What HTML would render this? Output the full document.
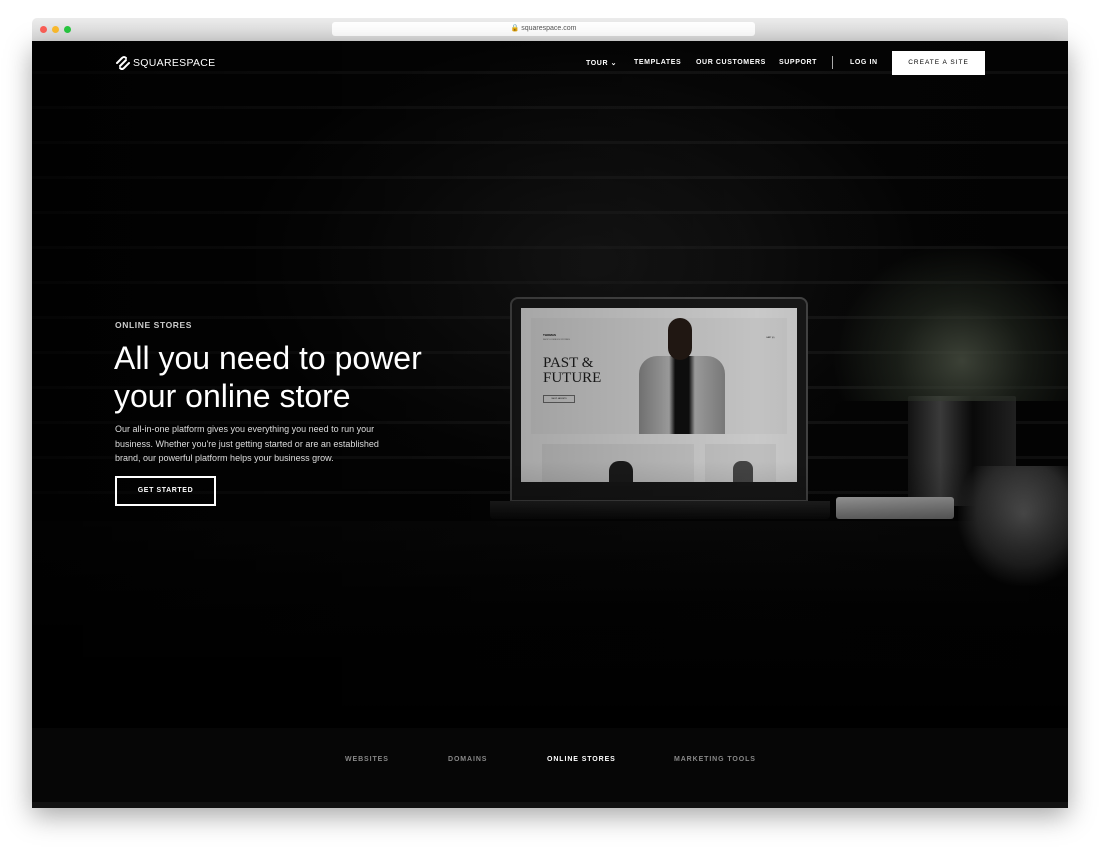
<!DOCTYPE html>
<html><head><style>
*{margin:0;padding:0;box-sizing:border-box}
body{width:1100px;height:855px;background:#fff;position:relative;overflow:hidden;font-family:"Liberation Sans",sans-serif}
.chrome{position:absolute;left:32px;top:18px;width:1036px;height:23px;background:linear-gradient(#ececec,#d8d8d8);border-radius:5px 5px 0 0}
.dot{position:absolute;top:8px;width:7px;height:7px;border-radius:50%}
.url{position:absolute;left:300px;top:4px;width:423px;height:14px;background:#fff;border-radius:3px;font-size:7px;color:#555;text-align:center;line-height:14px}
.page{position:absolute;left:32px;top:41px;width:1036px;height:767px;background:#000;overflow:hidden;box-shadow:0 8px 25px rgba(0,0,0,.35)}
.bricks{position:absolute;left:0;top:0;width:1036px;height:520px;
background:
repeating-linear-gradient(0deg,rgba(0,0,0,0) 0 32px,rgba(40,40,40,.5) 32px 35px),
radial-gradient(ellipse 500px 320px at 560px 220px,#1a1a1a,#050505 70%);
}
.fade{position:absolute;left:0;top:0;width:1036px;height:700px;background:linear-gradient(90deg,rgba(0,0,0,.8) 0,rgba(0,0,0,.35) 45%,rgba(0,0,0,.2) 70%,rgba(0,0,0,.4) 100%),linear-gradient(180deg,rgba(0,0,0,0) 60%,#000 100%)}
.nav{position:absolute;top:18px;font-size:7px;color:#fff;letter-spacing:.6px;font-weight:bold}
.footer{position:absolute;left:0;top:687px;width:1036px;height:80px;background:#060606;border-bottom:6px solid #111}
.ft{position:absolute;top:28px;font-size:7px;letter-spacing:.9px;font-weight:bold;color:#888}
</style></head><body>
<div class="chrome">
<div class="dot" style="left:8px;background:#fc5f57"></div>
<div class="dot" style="left:20px;background:#fdbc2e"></div>
<div class="dot" style="left:32px;background:#28c840"></div>
<div class="url">🔒 squarespace.com</div>
</div>
<div class="page">
<div class="bricks"></div>
<div style="position:absolute;left:0;top:480px;width:1036px;height:210px;background:linear-gradient(180deg,#0d0d0d,#060606 50%,#030303)"></div>
<div style="position:absolute;left:478px;top:256px;width:298px;height:205px;background:#1c1c1c;border:2px solid #555;border-radius:8px 8px 0 0"></div>
<div style="position:absolute;left:458px;top:460px;width:340px;height:18px;background:linear-gradient(#2a2a2a,#0c0c0c);border-radius:0 0 4px 4px"></div>
<div style="position:absolute;left:489px;top:267px;width:276px;height:174px;background:#fbfbfb;overflow:hidden">
 <div style="position:absolute;left:10px;top:10px;width:256px;height:116px;background:#f3f3f3"></div>
 <div style="position:absolute;left:22px;top:25px;font-size:3px;font-weight:bold">THOMAS</div>
 <div style="position:absolute;left:22px;top:31px;font-size:2px;color:#555">SHOP LOOKBOOK STORIES</div>
 <div style="position:absolute;left:245px;top:29px;font-size:2px">CART (0)</div>
 <div style="position:absolute;left:22px;top:48px;font-family:'Liberation Serif',serif;font-size:15px;line-height:15px;color:#222">PAST &amp;<br>FUTURE</div>
 <div style="position:absolute;left:22px;top:87px;width:32px;height:8px;border:1px solid #777;font-size:2px;line-height:6px;text-align:center">SHOP JACKETS</div>
 <div style="position:absolute;left:118px;top:48px;width:86px;height:78px;background:linear-gradient(90deg,#999,#ccc 35%,#111 42%,#111 58%,#c8c8c8 65%,#999);border-radius:18px 18px 0 0"></div>
 <div style="position:absolute;left:147px;top:10px;width:24px;height:42px;background:#2a1e18;border-radius:12px"></div>
 <div style="position:absolute;left:21px;top:136px;width:152px;height:40px;background:#eee"></div>
 <div style="position:absolute;left:184px;top:136px;width:71px;height:40px;background:#eee"></div>
 <div style="position:absolute;left:88px;top:153px;width:24px;height:25px;background:#222;border-radius:10px 10px 0 0"></div>
 <div style="position:absolute;left:212px;top:153px;width:20px;height:25px;background:#555;border-radius:8px 8px 0 0"></div>
</div>
<div style="position:absolute;left:876px;top:355px;width:108px;height:110px;background:linear-gradient(90deg,#1a1a1a,#555 30%,#0e0e0e 60%,#333);border-radius:2px"></div>
<div style="position:absolute;left:800px;top:200px;width:236px;height:160px;background:radial-gradient(ellipse at 130px 120px,rgba(110,120,100,.8),rgba(60,70,55,.55) 35%,rgba(0,0,0,0) 70%)"></div>
<div style="position:absolute;left:926px;top:425px;width:110px;height:120px;background:radial-gradient(ellipse at 60% 40%,#888,#444 50%,rgba(0,0,0,0) 72%)"></div>
<div style="position:absolute;left:804px;top:456px;width:118px;height:22px;background:linear-gradient(#ddd,#999);border-radius:3px"></div>
<div class="fade"></div>
<svg style="position:absolute;left:82px;top:14px" width="18" height="16" viewBox="0 0 18 16"><g fill="none" stroke="#fff" stroke-width="2" stroke-linecap="round"><path d="M3 8 L8 3 Q10 1 12 3"/><path d="M6 11 L12 5"/><path d="M6 13 Q8 15 10 13 L15 8"/></g></svg>
<div style="position:absolute;left:101px;top:16px;font-size:10.5px;color:#fff;letter-spacing:.3px">SQUARESPACE</div>
<div class="nav" style="left:554px">TOUR ⌄</div>
<div class="nav" style="left:602px">TEMPLATES</div>
<div class="nav" style="left:664px">OUR CUSTOMERS</div>
<div class="nav" style="left:747px">SUPPORT</div>
<div style="position:absolute;left:800px;top:15px;width:1px;height:13px;background:#aaa"></div>
<div class="nav" style="left:818px">LOG IN</div>
<div style="position:absolute;left:860px;top:10px;width:93px;height:24px;background:#fff;color:#000;font-size:6.5px;letter-spacing:1px;text-align:center;line-height:24px">CREATE A SITE</div>
<div style="position:absolute;left:83px;top:279px;font-size:8.5px;color:#ccc;letter-spacing:.6px;font-weight:bold">ONLINE STORES</div>
<div style="position:absolute;left:82px;top:298px;font-size:32px;line-height:38px;color:#fff">All you need to power<br>your online store</div>
<div style="position:absolute;left:83px;top:381px;font-size:9px;line-height:14.5px;color:#ddd;width:282px">Our all-in-one platform gives you everything you need to run your business. Whether you're just getting started or are an established brand, our powerful platform helps your business grow.</div>
<div style="position:absolute;left:83px;top:435px;width:101px;height:30px;border:2px solid #fff;color:#fff;font-size:7px;font-weight:bold;letter-spacing:.6px;text-align:center;line-height:26px">GET STARTED</div>
<div class="footer">
<div class="ft" style="left:313px">WEBSITES</div>
<div class="ft" style="left:416px">DOMAINS</div>
<div class="ft" style="left:515px;color:#fff">ONLINE STORES</div>
<div class="ft" style="left:642px">MARKETING TOOLS</div>
</div>
</div>
</body></html>
